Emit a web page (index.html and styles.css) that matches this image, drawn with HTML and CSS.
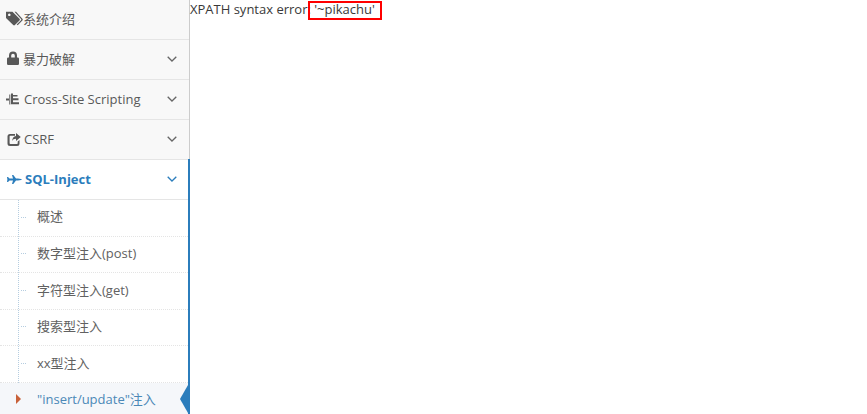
FILE: index.html
```html
<!DOCTYPE html>
<html lang="zh">
<head>
  <meta charset="UTF-8">
  <title>Pikachu</title>
  <link rel="stylesheet" href="styles.css">
</head>
<body>
  <div class="layout">
    <!-- sidebar -->
    <div class="sidebar">
      <div class="nav-item cjk">
        <svg class="nav-icon" viewBox="1 0 17 15"><path d="M0 .8h6.500l7 7a1.200 1.200 0 0 1 0 1.700l-4.600 4.600a1.200 1.200 0 0 1-1.700 0l-7.200-7.200zM3.300 2.500a1.300 1.300 0 1 0 .01 0z" fill-rule="evenodd"/><path d="M8.500 .8h1.500l6.400 7a1.200 1.200 0 0 1 0 1.700l-4.700 4.800-1-.8 4.300-4.300a.9.900 0 0 0 0-1.300z"/></svg>
        <span class="nav-text">系统介绍</span>
      </div>
      <div class="nav-item cjk">
        <svg class="nav-icon" viewBox="1 0 17 15"><path d="M3 6.500V4.500a4 4 0 0 1 8 0v2h.800a1.200 1.200 0 0 1 1.200 1.200v5.100a1.200 1.200 0 0 1-1.200 1.200H2.200A1.200 1.200 0 0 1 1 12.800V7.700a1.200 1.200 0 0 1 1.200-1.200zM5.200 6.500h3.600v-2a1.800 1.800 0 0 0-3.600 0z" fill-rule="evenodd"/></svg>
        <span class="nav-text">暴力破解</span>
        <svg class="chevron" viewBox="0 0 10 6"><path d="M.7.7 5 5 9.300.7"/></svg>
      </div>
      <div class="nav-item">
        <svg class="nav-icon" viewBox="1 0 17 15"><path d="M0 6.500h3v2H0zM3.300 2.500h1v10h-1zM5 1.500h2v1.500h4.500v1.500H7v1.800h5.500v2H7v1.900h6v2H5z"/></svg>
        <span class="nav-text">Cross-Site Scripting</span>
        <svg class="chevron" viewBox="0 0 10 6"><path d="M.7.7 5 5 9.300.7"/></svg>
      </div>
      <div class="nav-item">
        <svg class="nav-icon" viewBox="0 0 17 15"><path d="M3 2h5v1.800H3.300a.7.7 0 0 0-.7.7v6.800c0 .4.300.7.700.7H10a.7.7 0 0 0 .7-.7V9.500l1.800-1.500v3.500a2.500 2.500 0 0 1-2.500 2.500H3a2.500 2.500 0 0 1-2.500-2.500v-7A2.500 2.500 0 0 1 3 2z"/><path d="M9 1l4.800 4L9 9V6.800c-2 0-3.200.7-3.800 2.400 0-3 1.500-5 3.800-5.200z"/></svg>
        <span class="nav-text">CSRF</span>
        <svg class="chevron" viewBox="0 0 10 6"><path d="M.7.7 5 5 9.300.7"/></svg>
      </div>
      <div class="nav-item open">
        <svg class="nav-icon" viewBox="0 0 17 15"><path d="M0 5h1l1.500 1.500H6L5 3h1.300L9 6.500h2l3 .5 1 .5-1 .5-3 .5H9L6.300 12H5l1-3.500H2.500L1 10H0l.4-2.500z"/></svg>
        <span class="nav-text">SQL-Inject</span>
        <svg class="chevron" viewBox="0 0 10 6"><path d="M.7.7 5 5 9.300.7"/></svg>
      </div>
      <ul class="submenu">
        <li class="sub-item">概述</li>
        <li class="sub-item">数字型注入(post)</li>
        <li class="sub-item">字符型注入(get)</li>
        <li class="sub-item">搜索型注入</li>
        <li class="sub-item">xx型注入</li>
        <li class="sub-item active">"insert/update"注入</li>
      </ul>
    </div>

    <div class="content">
      <p class="sql-error">XPATH syntax error: '~pikachu'</p>
      <!-- annotation drawn over the result -->
      <div class="red-box"></div>
    </div>
  </div>
</body>
</html>
```

FILE: styles.css
```css
html, body {
  margin: 0;
  padding: 0;
  height: 414px;
  overflow: hidden;
}

body {
  font-family: "Open Sans", "Noto Sans CJK SC", sans-serif;
  font-size: 13px;
  color: #393939;
  background-color: #fff;
}

.layout {
  display: flex;
  height: 414px;
}

.sidebar {
  position: relative;
  width: 190px;
  flex-shrink: 0;
  box-sizing: border-box;
  border-right: 1px solid #ccc;
  background-color: #f8f8f8;
}

.nav-item {
  display: flex;
  align-items: center;
  height: 38px;
  padding-bottom: 1px;
  padding-left: 7px;
  border-bottom: 1px solid #e5e5e5;
  color: #585858;
}

.nav-item.cjk .nav-icon,
.nav-item.cjk .nav-text {
  margin-top: -2px;
}

.nav-item.cjk .nav-text {
  margin-left: -1px;
}

.nav-icon {
  width: 17px;
  height: 15px;
  fill: #585858;
  flex-shrink: 0;
  overflow: visible;
}

.chevron {
  width: 10px;
  height: 6px;
  margin-left: auto;
  margin-right: 12px;
  fill: none;
  stroke: #666;
  stroke-width: 1.300;
}

.nav-item.open {
  position: relative;
  margin-right: -1px;
  background-color: #fff;
  color: #2b7dbc;
  font-weight: 700;
}

.nav-item.open::after {
  content: "";
  position: absolute;
  top: -1px;
  right: 0;
  bottom: -1px;
  width: 2px;
  background-color: #2b7dbc;
}

.nav-item.open .nav-icon {
  fill: #2b7dbc;
  margin-right: 1px;
}

.nav-item.open .chevron {
  stroke: #2b7dbc;
  margin-right: 13px;
}

.submenu {
  position: relative;
  margin: 0 -1px 0 0;
  padding: 0;
  list-style: none;
  border-right: 2px solid #2b7dbc;
  background-color: #fff;
  height: 215px;
}

.submenu::before {
  content: "";
  position: absolute;
  top: 0;
  bottom: 0;
  left: 18px;
  border-left: 1px dotted #b5cde0;
}

.sub-item {
  position: relative;
  box-sizing: border-box;
  height: 37px;
  line-height: 35px;
  padding-left: 37px;
  border-bottom: 1px dotted #e4e4e4;
  color: #616161;
  white-space: nowrap;
}

.sub-item:first-child {
  line-height: 33px;
}

.sub-item:nth-child(even) {
  height: 36px;
  line-height: 33px;
}

.sub-item::before {
  content: "";
  position: absolute;
  top: 17px;
  left: 21px;
  width: 5px;
  border-top: 1px dotted #b5cde0;
}

.sub-item:nth-child(even)::before {
  top: 16px;
}

.sub-item.active {
  background-color: #f5f7fa;
  color: #4b88b7;
}

.sub-item.active::before {
  top: 11px;
  left: 16px;
  width: 0;
  border-top: 5px solid transparent;
  border-bottom: 5px solid transparent;
  border-left: 5px solid #c86139;
}

.sub-item.active::after {
  content: "";
  position: absolute;
  top: 2px;
  right: 0;
  border-top: 14px solid transparent;
  border-bottom: 14px solid transparent;
  border-right: 8px solid #2b7dbc;
}

.content {
  position: relative;
  flex: 1;
}

.sql-error {
  margin: 0;
  line-height: 18px;
  white-space: nowrap;
}

.red-box {
  position: absolute;
  top: 1px;
  left: 118px;
  box-sizing: border-box;
  width: 74px;
  height: 19px;
  border: 2px solid #f00;
}
```
